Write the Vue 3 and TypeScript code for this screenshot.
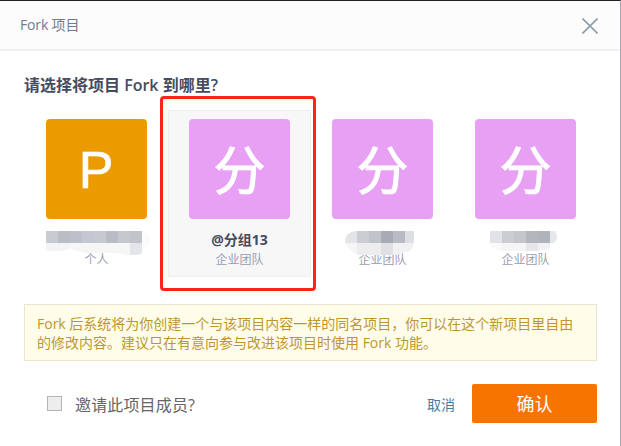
<script setup lang="ts">
import { ref } from 'vue'

interface Block {
  x: number
  y: number
  w: number
  h: number
  fill: string
}

interface Namespace {
  id: number
  letter: string
  name: string
  kind: string
  tone: 'amber' | 'violet'
  outline?: string
  blocks?: Block[]
}

// Mosaic coordinates are relative to the 143x28 area under each avatar.
const namespaces: Namespace[] = [
  {
    id: 1,
    letter: 'P',
    name: '',
    kind: '个人',
    tone: 'amber',
    outline: 'M22 0H119Q126 2 126 9Q126 16 119 18V21Q117 24 111 24H101Q98 22 84 22H64Q53 21 46 17Q42 20 34 20H22Z',
    blocks: [
      { x: 22, y: 0, w: 12, h: 12, fill: '#c9cbd2' },
      { x: 34, y: 0, w: 12, h: 12, fill: '#bbbdc5' },
      { x: 46, y: 0, w: 12, h: 12, fill: '#bcc0ca' },
      { x: 58, y: 0, w: 12, h: 12, fill: '#c2c7d1' },
      { x: 70, y: 0, w: 12, h: 12, fill: '#c5c9d0' },
      { x: 82, y: 0, w: 12, h: 12, fill: '#b9bbc5' },
      { x: 94, y: 0, w: 12, h: 12, fill: '#c6c8ce' },
      { x: 106, y: 0, w: 12, h: 12, fill: '#c2c4cc' },
      { x: 118, y: 0, w: 9, h: 24, fill: '#fbfbfc' },
      { x: 22, y: 12, w: 24, h: 12, fill: '#f4f4f6' },
      { x: 46, y: 12, w: 60, h: 12, fill: '#f6f6f7' },
      { x: 106, y: 12, w: 12, h: 12, fill: '#e4e5ea' },
    ],
  },
  { id: 2, letter: '分', name: '@分组13', kind: '企业团队', tone: 'violet' },
  {
    id: 3,
    letter: '分',
    name: '',
    kind: '企业团队',
    tone: 'violet',
    outline: 'M46 0H104V8Q104 18 99 21H93Q91 24 84 24H48Q42 22 39 17Q35 14 35 9Q36 1 46 0Z',
    blocks: [
      { x: 35, y: 0, w: 12, h: 12, fill: '#e2e4e9' },
      { x: 47, y: 0, w: 12, h: 12, fill: '#cbcdd3' },
      { x: 59, y: 0, w: 12, h: 12, fill: '#c0c3cb' },
      { x: 71, y: 0, w: 12, h: 12, fill: '#a7abb6' },
      { x: 83, y: 0, w: 12, h: 12, fill: '#b8bbc4' },
      { x: 95, y: 0, w: 10, h: 12, fill: '#dcdee3' },
      { x: 35, y: 12, w: 12, h: 12, fill: '#f4f5f7' },
      { x: 47, y: 12, w: 24, h: 12, fill: '#ededf0' },
      { x: 71, y: 12, w: 12, h: 12, fill: '#dfe1e6' },
      { x: 83, y: 12, w: 21, h: 12, fill: '#f1f1f3' },
    ],
  },
  {
    id: 4,
    letter: '分',
    name: '',
    kind: '企业团队',
    tone: 'violet',
    outline: 'M37 0H102Q104 2 104 7Q103 12 97 13V17Q93 20 84 20H50Q39 18 37 15Z',
    blocks: [
      { x: 37, y: 0, w: 12, h: 12, fill: '#e1e3e8' },
      { x: 49, y: 0, w: 12, h: 12, fill: '#cbcdd2' },
      { x: 61, y: 0, w: 12, h: 12, fill: '#c4c6cb' },
      { x: 73, y: 0, w: 12, h: 12, fill: '#b3b6bd' },
      { x: 85, y: 0, w: 12, h: 12, fill: '#afb4bb' },
      { x: 97, y: 0, w: 8, h: 12, fill: '#e5e7ec' },
      { x: 37, y: 12, w: 12, h: 12, fill: '#fafafb' },
      { x: 49, y: 12, w: 24, h: 12, fill: '#f5f5f6' },
      { x: 73, y: 12, w: 12, h: 12, fill: '#e5e7eb' },
      { x: 85, y: 12, w: 12, h: 12, fill: '#f1f2f4' },
    ],
  },
]

const selected = ref(2)
const invite = ref(false)
</script>

<template>
  <section class="dialog" role="dialog">
    <header class="head">
      <span class="title">Fork 项目</span>
      <button class="close" aria-label="关闭">
        <svg width="16" height="16" viewBox="0 0 16 16">
          <path d="M.5 .5L15.5 15.5M15.5 .5L.5 15.5" fill="none" stroke="#8b9eab" stroke-width="1.6" />
        </svg>
      </button>
    </header>

    <main class="body">
      <h2 class="question">请选择将项目 Fork 到哪里?</h2>
      <div class="cards">
        <div
          v-for="ns in namespaces"
          :key="ns.id"
          class="card"
          :class="{ active: ns.id === selected }"
          @click="selected = ns.id"
        >
          <div class="avatar" :class="ns.tone">
            <svg width="101" height="100" viewBox="0 0 101 100">
              <text v-if="ns.tone === 'amber'" class="glyph latin" x="50" y="69" text-anchor="middle">{{ ns.letter }}</text>
              <text v-else class="glyph" x="50.5" y="70.5" text-anchor="middle">{{ ns.letter }}</text>
            </svg>
          </div>
          <div class="name">{{ ns.name }}</div>
          <div class="kind">{{ ns.kind }}</div>
          <svg v-if="ns.blocks" class="mosaic" width="143" height="28" viewBox="0 0 143 28">
            <clipPath :id="`mask-${ns.id}`"><path :d="ns.outline" /></clipPath>
            <g :clip-path="`url(#mask-${ns.id})`">
              <rect
                v-for="(b, i) in ns.blocks"
                :key="i"
                :x="b.x"
                :y="b.y"
                :width="b.w"
                :height="b.h"
                :fill="b.fill"
                shape-rendering="crispEdges"
              />
            </g>
          </svg>
          <div v-if="ns.id === selected" class="marker"></div>
        </div>
      </div>

      <p class="notice">
        Fork 后系统将为你创建一个与该项目内容一样的同名项目，你可以在这个新项目里自由<br />的修改内容。建议只在有意向参与改进该项目时使用 Fork 功能。
      </p>

      <footer class="foot">
        <label class="invite">
          <input v-model="invite" class="check" type="checkbox" />
          <span class="invite-text">邀请此项目成员?</span>
        </label>
        <a class="cancel">取消</a>
        <button class="confirm">确认</button>
      </footer>
    </main>
  </section>
</template>

<style>
body {
  margin: 0;
  overflow: hidden;
}
</style>

<style scoped>
.dialog {
  box-sizing: border-box;
  width: 621px;
  height: 446px;
  border-top: 1px solid #222226;
  border-right: 1px solid #a6a8ad;
  background: #fff;
  font-family: "Open Sans", "Noto Sans CJK SC", sans-serif;
}

.head {
  box-sizing: border-box;
  height: 50px;
  padding: 0 22px 0 20px;
  display: flex;
  align-items: center;
  justify-content: space-between;
  background: #fcfcfc;
  border-bottom: 2px solid #eff2f5;
}

.title {
  font-size: 14px;
  line-height: 20px;
  letter-spacing: -0.15px;
  color: #76798c;
}

.close {
  display: flex;
  padding: 0;
  margin-top: 1px;
  border: 0;
  background: none;
}

.body {
  padding: 22px 23px 0 24px;
}

.question {
  margin: 0;
  height: 24px;
  font-size: 16px;
  line-height: 24px;
  font-weight: 600;
  color: #464b60;
}

.cards {
  display: flex;
  margin: 13px 0 0 1px;
}

.card {
  position: relative;
  box-sizing: border-box;
  width: 143px;
  flex: none;
  height: 167px;
  padding-top: 8px;
  border: 1px solid transparent;
  display: flex;
  flex-direction: column;
  align-items: center;
}

.card.active {
  background: #f7f7f7;
  border-color: #efefef;
}

.avatar {
  width: 101px;
  height: 100px;
  flex: none;
  border-radius: 4px;
  display: flex;
}

.amber {
  background: #eb9b00;
}

.violet {
  background: #e7a0f3;
}

.glyph {
  fill: #fff;
  stroke: #fff;
  stroke-width: 1px;
  font-family: "Noto Sans CJK SC", sans-serif;
  font-size: 52px;
}

.latin {
  font-family: "Liberation Sans", sans-serif;
  stroke-width: 0.6px;
}

.name {
  height: 20px;
  margin-top: 11px;
  font-size: 14px;
  line-height: 19px;
  font-weight: 700;
  color: #464b5f;
}

.kind {
  margin-top: 1px;
  font-size: 12px;
  line-height: 18px;
  color: #9b9eb0;
}

.mosaic {
  position: absolute;
  left: -2px;
  top: 120px;
}

.marker {
  position: absolute;
  box-sizing: border-box;
  left: -9px;
  top: -15px;
  width: 156px;
  height: 195px;
  border: 3px solid #ff2318;
  border-radius: 4px;
  pointer-events: none;
}

.notice {
  box-sizing: border-box;
  width: 573px;
  height: 57px;
  margin: 27px 0 0;
  padding: 9px 0 0 12px;
  border: 1px solid #ebe5d0;
  background: #fffdea;
  font-size: 14px;
  line-height: 19px;
  white-space: nowrap;
  color: #be962d;
}

.foot {
  height: 39px;
  margin-top: 23px;
  display: flex;
  align-items: center;
}

.invite {
  display: flex;
  align-items: center;
  gap: 13px;
  margin-left: 23px;
  font-size: 16px;
  line-height: 24px;
  color: #666;
}

.invite-text {
  padding-top: 2px;
  letter-spacing: 0.15px;
}

.check {
  appearance: none;
  box-sizing: border-box;
  width: 15px;
  height: 15px;
  margin: 0;
  border: 1px solid #b4b4b4;
  background: #ededed;
}

.cancel {
  margin-left: auto;
  margin-right: 17px;
  padding-top: 2px;
  font-size: 14px;
  line-height: 20px;
  color: #467c9e;
}

.confirm {
  width: 125px;
  height: 39px;
  padding: 0;
  border: 0;
  border-radius: 2px;
  background: #f77400;
  color: #fff;
  font-family: inherit;
  font-size: 18px;
  line-height: 38px;
}
</style>
